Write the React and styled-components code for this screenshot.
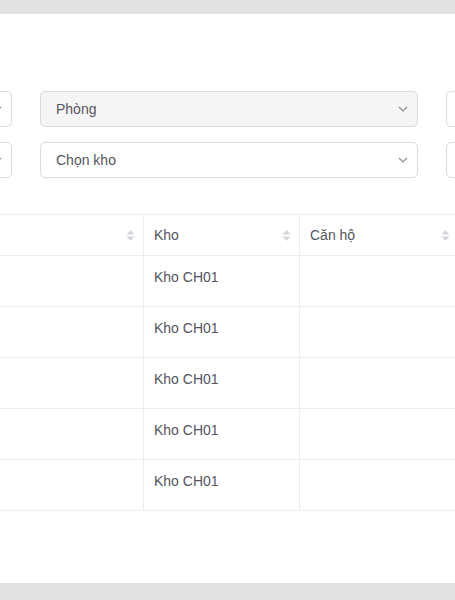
import styled, { createGlobalStyle } from "styled-components";

const GlobalStyle = createGlobalStyle`
  html, body {
    margin: 0;
    padding: 0;
    background: #e2e2e2;
    overflow: hidden;
    font-family: "Liberation Sans", Arial, sans-serif;
  }
`

const Page = styled.div`
  height: 600px;
  padding-top: 14px;
  box-sizing: border-box;
`

const Card = styled.div`
  height: 569px;
  background: #ffffff;
  overflow: hidden;
  padding-top: 77px;
  box-sizing: border-box;
`

const Filters = styled.div`
  display: grid;
  grid-template-columns: repeat(3, 378px);
  column-gap: 28px;
  row-gap: 15px;
  margin-left: -366px;
`

const Select = styled.div`
  display: flex;
  align-items: center;
  justify-content: space-between;
  height: 36px;
  box-sizing: border-box;
  padding: 0 9px 0 15px;
  border: 1px solid #d9d9e1;
  border-radius: 5px;
  background: ${(p) => (p.disabled ? "#f5f5f5" : "#ffffff")};
  color: #555560;
  font-size: 14px;
`

const Chevron = () => (
  <svg width="10" height="6" viewBox="0 0 10 6">
    <path d="M1 1 L5 5 L9 1" fill="none" stroke="#8c8c96" strokeWidth="1.2" />
  </svg>
)

const Table = styled.div`
  display: grid;
  grid-template-columns: 300px 156px 158px;
  margin-left: -156px;
  margin-top: 36px;
  width: 614px;
  border-top: 1px solid #ebebf1;
`

const HeadCell = styled.div`
  display: flex;
  align-items: center;
  justify-content: space-between;
  height: 41px;
  box-sizing: border-box;
  padding: 0 8px 0 10px;
  border-bottom: 1px solid #ebebf1;
  border-right: ${(p) => (p.last ? "none" : "1px solid #ebebf1")};
  color: #54545e;
  font-size: 14px;
`

const Cell = styled.div`
  height: 51px;
  box-sizing: border-box;
  padding: 13px 10px 0;
  line-height: 16px;
  border-bottom: 1px solid #ebebf1;
  border-right: ${(p) => (p.last ? "none" : "1px solid #ebebf1")};
  color: #54545e;
  font-size: 14px;
`

const SortIcon = () => (
  <svg width="9" height="13" viewBox="0 0 9 13">
    <path d="M4.5 1 L8.5 5.5 L0.5 5.5 Z" fill="#d6d6dc" />
    <path d="M4.5 12 L8.5 7.5 L0.5 7.5 Z" fill="#d6d6dc" />
  </svg>
)

const rows = [1, 2, 3, 4, 5];

function App() {
  return (
    <Page>
      <GlobalStyle />
      <Card>
        <Filters>
          <Select><span /><Chevron /></Select>
          <Select disabled><span>Phòng</span><Chevron /></Select>
          <Select><span /><Chevron /></Select>
          <Select><span /><Chevron /></Select>
          <Select><span>Chọn kho</span><Chevron /></Select>
          <Select><span /><Chevron /></Select>
        </Filters>

        <Table>
          <HeadCell><span /><SortIcon /></HeadCell>
          <HeadCell><span>Kho</span><SortIcon /></HeadCell>
          <HeadCell last><span>Căn hộ</span><SortIcon /></HeadCell>
          {rows.map((r) => [
            <Cell key={`a${r}`} />,
            <Cell key={`b${r}`}>Kho CH01</Cell>,
            <Cell key={`c${r}`} last />,
          ])}
        </Table>
      </Card>
    </Page>
  )
}

export default App;
